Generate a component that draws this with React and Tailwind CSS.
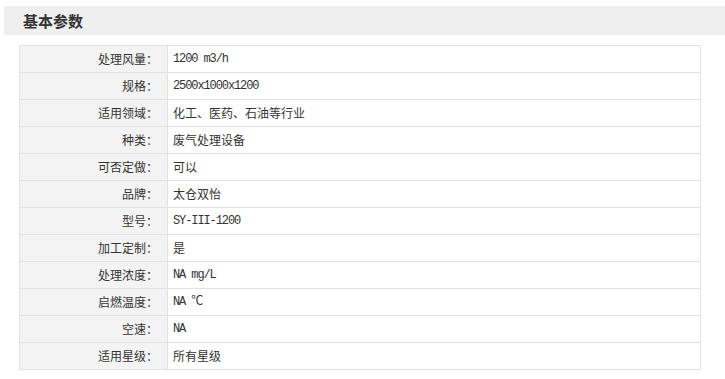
import React from "react";

const params = [
  { label: "处理风量：", value: "1200 m3/h" },
  { label: "规格：", value: "2500x1000x1200" },
  { label: "适用领域：", value: "化工、医药、石油等行业" },
  { label: "种类：", value: "废气处理设备" },
  { label: "可否定做：", value: "可以" },
  { label: "品牌：", value: "太仓双怡" },
  { label: "型号：", value: "SY-III-1200" },
  { label: "加工定制：", value: "是" },
  { label: "处理浓度：", value: "NA mg/L" },
  { label: "启燃温度：", value: "NA ℃" },
  { label: "空速：", value: "NA" },
  { label: "适用星级：", value: "所有星级" },
];

const cjk = { fontFamily: '"Noto Sans CJK SC", sans-serif' };

const App = () => {
  return (
    <div className="w-[725px] h-[379px] bg-white pt-[6px] overflow-hidden" style={cjk}>
      {/* Header */}
      <div className="ml-[4px] h-[29px] bg-[#efefef] flex items-center pl-[19px]">
        <h2 className="text-[15px] font-bold text-[#333] leading-none">基本参数</h2>
      </div>

      {/* Params table */}
      <div className="mt-[10px] ml-[19px] w-[682px] border border-[#e2e2e2] border-b-0">
        {params.map((p) => {
          const isCjk = /[\u4e00-\u9fff]/.test(p.value);
          return (
            <div key={p.label} className="flex h-[27px] border-b border-[#e2e2e2]">
              <div className="w-[148px] shrink-0 bg-[#f3f3f3] border-r border-[#e2e2e2] flex items-center justify-end pr-[9px] text-[12px] text-[#333]">
                {p.label}
              </div>
              <div className="flex-1 flex items-center pl-[5px] text-[12px] text-[#333]">
                {isCjk ? (
                  <span>{p.value}</span>
                ) : (
                  <span
                    className="tracking-[-1.1px]"
                    style={{ fontFamily: '"Liberation Mono", "Noto Sans CJK SC", monospace' }}
                  >
                    {p.value}
                  </span>
                )}
              </div>
            </div>
          );
        })}
      </div>
    </div>
  );
};

export default App;
